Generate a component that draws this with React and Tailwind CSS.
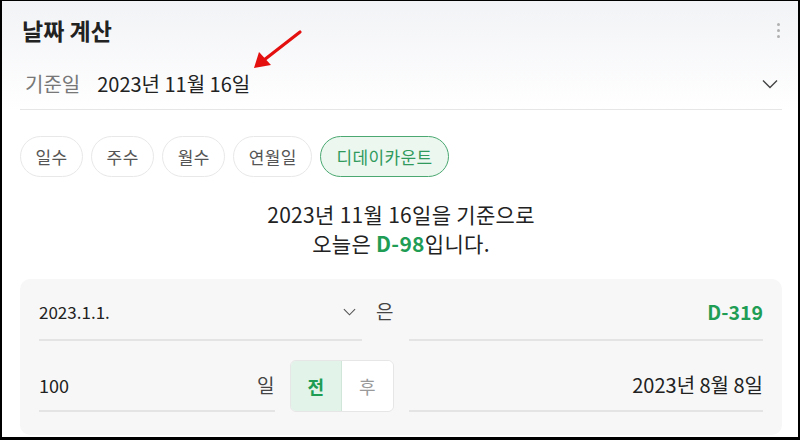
import React from 'react';

const font = { fontFamily: '"Noto Sans CJK KR", "Noto Sans", sans-serif' };

function Chevron({ className }) {
  return (
    <svg viewBox="0 0 16 10" className={className} fill="none" stroke="currentColor" strokeWidth="1.4">
      <path d="M1 1.5 L8 8.5 L15 1.5" />
    </svg>
  );
}

export default function App() {
  const tabs = ["일수", "주수", "월수", "연월일", "디데이카운트"];

  return (
    <div className="relative w-[800px] h-[440px] overflow-hidden bg-white border-black border-t border-l-2 border-r-2 border-b-[3px]" style={font}>
      <div className="bg-gradient-to-b from-[#f2f3f6] to-white pl-[18px] pr-[16px]">
        <div className="h-[58px] flex items-center justify-between">
          <h1 className="text-[23px] font-bold text-[#222] pl-[2px]">날짜 계산</h1>
          <div className="flex flex-col gap-[3px] mr-[2px] mt-[1px]">
            <span className="w-[3px] h-[3px] rounded-full bg-[#b0b0b0]" />
            <span className="w-[3px] h-[3px] rounded-full bg-[#b0b0b0]" />
            <span className="w-[3px] h-[3px] rounded-full bg-[#b0b0b0]" />
          </div>
        </div>
        <div className="h-[51px] flex items-center justify-between border-b border-[#e6e6e6] pl-[5px] pr-[4px]">
          <div className="flex items-center gap-[17px] text-[20px]">
            <span className="text-[#777]">기준일</span>
            <span className="text-[#222]">2023년 11월 16일</span>
          </div>
          <Chevron className="w-[16px] h-[10px] text-[#444]" />
        </div>
      </div>

      <div className="pl-[18px] pr-[16px]">
        <div className="flex gap-[8px] mt-[26px]">
          {tabs.map((t, i) => (
            <button
              key={t}
              className={
                i === 4
                  ? "h-[41px] px-[15px] rounded-full border border-[#4aa870] bg-[#ecf7f0] text-[#2f9a5c] text-[17px] tracking-[0.4px]"
                  : "h-[41px] px-[14.5px] rounded-full border border-[#e8e8e8] bg-white text-[#555] text-[17px] tracking-[0.4px]"
              }
            >
              {t}
            </button>
          ))}
        </div>

        <div className="mt-[23px] text-center text-[21px] leading-[29px] text-[#222] tracking-[0.3px]">
          <p>2023년 11월 16일을 기준으로</p>
          <p>
            오늘은 <span className="font-bold text-[#1f9d55]">D-98</span>입니다.
          </p>
        </div>

        <div className="mt-[21px] rounded-[10px] bg-[#f7f7f7] px-[19px] pt-[12px] pb-[23px] grid grid-cols-2 gap-x-[15px]">
          <div className="flex items-end">
            <div className="flex-1 h-[50px] flex items-center justify-between border-b-2 border-[#e4e4e4] pr-[6px] pb-[6px]">
              <span className="text-[17px] text-[#222]">2023.1.1.</span>
              <Chevron className="w-[13px] h-[8px] text-[#555]" />
            </div>
            <div className="w-[32px] h-[50px] flex items-center justify-end text-[19px] text-[#444] pb-[10px]">은</div>
          </div>
          <div className="h-[50px] flex items-center justify-end border-b-2 border-[#e4e4e4] pb-[6px]">
            <span className="text-[19.5px] font-bold text-[#1f9d55]">D-319</span>
          </div>

          <div className="flex items-end mt-[19px]">
            <div className="flex-1 h-[52px] flex items-center justify-between border-b-2 border-[#e4e4e4]">
              <span className="text-[18px] text-[#222]">100</span>
              <span className="text-[19px] text-[#444]">일</span>
            </div>
            <div className="ml-[15px] w-[104px] h-[52px] flex rounded-[6px] border border-[#e6e6e6] overflow-hidden">
              <div className="flex-1 flex items-center justify-center bg-[#e2f3e9] border-r border-[#cfe6d8] text-[#1f9d55] font-bold text-[18px]">전</div>
              <div className="flex-1 flex items-center justify-center bg-white text-[#999] text-[18px]">후</div>
            </div>
          </div>
          <div className="mt-[19px] h-[52px] flex items-center justify-end border-b-2 border-[#e4e4e4]">
            <span className="text-[20px] text-[#222]">2023년 8월 8일</span>
          </div>
        </div>
      </div>

      <svg className="absolute left-[248px] top-[26px] w-[56px] h-[46px]" viewBox="0 0 56 46">
        <line x1="50" y1="5" x2="14" y2="33" stroke="#e41010" strokeWidth="3.2" strokeLinecap="round" />
        <polygon points="4,41 9,25 21,38" fill="#e41010" />
      </svg>
    </div>
  );
}
